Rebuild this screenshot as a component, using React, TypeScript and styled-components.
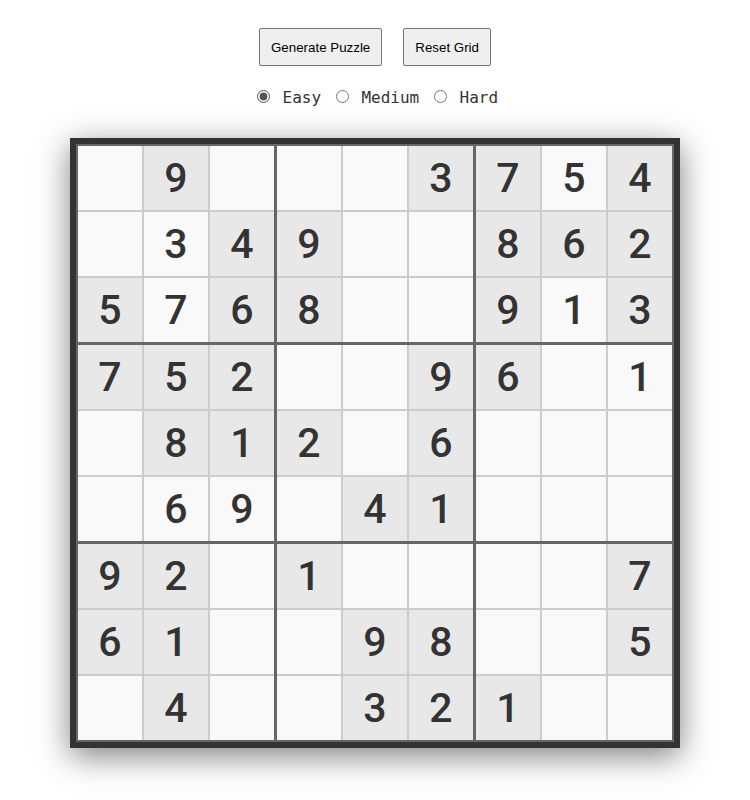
import styled, { createGlobalStyle } from "styled-components";

const puzzle: string[] = [
  ".9...3754",
  ".349..862",
  "5768..913",
  "752..96.1",
  ".812.6...",
  ".69.41...",
  "92.1....7",
  "61..98..5",
  ".4..321..",
];

// cells with a grey background (prefilled)
const shaded: string[] = [
  ".x...xx.x",
  "..xx..xxx",
  "x.xx..x.x",
  "xxx..xx..",
  ".xxx.x...",
  "....xx...",
  "xx.x....x",
  "xx..xx..x",
  ".x..xxx..",
];

const GlobalStyle = createGlobalStyle`
  body {
    margin: 8px;
    background: #ffffff;
    font-family: "Liberation Sans", Arial, sans-serif;
  }
`;

const Page = styled.div`
  display: flex;
  flex-direction: column;
  align-items: center;
  padding: 20px 0 60px;
`;

const Controls = styled.div`
  display: flex;
  gap: 21px;
`;

const Button = styled.button`
  height: 38px;
  padding: 0 11px;
  font-family: "Liberation Sans", Arial, sans-serif;
  font-size: 13.33px;
  color: #000;
  background: #efefef;
  border: 1px solid #767676;
  border-radius: 2px;
  cursor: pointer;
`;

const Levels = styled.div`
  margin-top: 21px;
  font-family: "DejaVu Sans Mono", "Liberation Mono", monospace;
  font-size: 16px;
  color: #333;
  line-height: 19px;
  label {
    white-space: pre;
  }
  input {
    margin: 3px 3px 0 5px;
    width: 13px;
    height: 13px;
    accent-color: #555;
  }
`;

const Board = styled.div`
  margin-top: 31px;
  display: grid;
  grid-template-columns: repeat(3, auto);
  gap: 3px;
  padding: 2px;
  background: #666;
  border: 6px solid #333;
  box-shadow: 0 8px 30px rgba(0, 0, 0, 0.5);
`;

const Box = styled.div`
  display: grid;
  grid-template-columns: repeat(3, 64px);
  grid-auto-rows: 64px;
  gap: 2px;
  background: #ccc;
`;

const Cell = styled.div<{ $given: boolean }>`
  display: flex;
  align-items: center;
  justify-content: center;
  background: ${(p) => (p.$given ? "#e8e8e8" : "#f9f9f9")};
  font-family: Roboto, "Noto Sans", sans-serif;
  font-weight: 500;
  font-size: 41px;
  color: #333;
`;

const App = () => {
  const boxes = [];
  for (let b = 0; b < 9; b++) {
    const br = Math.floor(b / 3) * 3;
    const bc = (b % 3) * 3;
    const cells = [];
    for (let i = 0; i < 9; i++) {
      const r = br + Math.floor(i / 3);
      const c = bc + (i % 3);
      const v = puzzle[r][c];
      cells.push(
        <Cell key={i} $given={shaded[r][c] === "x"}>
          {v === "." ? "" : v}
        </Cell>
      );
    }
    boxes.push(<Box key={b}>{cells}</Box>);
  }

  return (
    <Page>
      <GlobalStyle />
      <Controls>
        <Button>Generate Puzzle</Button>
        <Button>Reset Grid</Button>
      </Controls>
      <Levels>
        <label>
          <input type="radio" name="level" defaultChecked /> Easy
        </label>{" "}
        <label>
          <input type="radio" name="level" /> Medium
        </label>{" "}
        <label>
          <input type="radio" name="level" /> Hard
        </label>
      </Levels>
      <Board>{boxes}</Board>
    </Page>
  );
};

export default App;
